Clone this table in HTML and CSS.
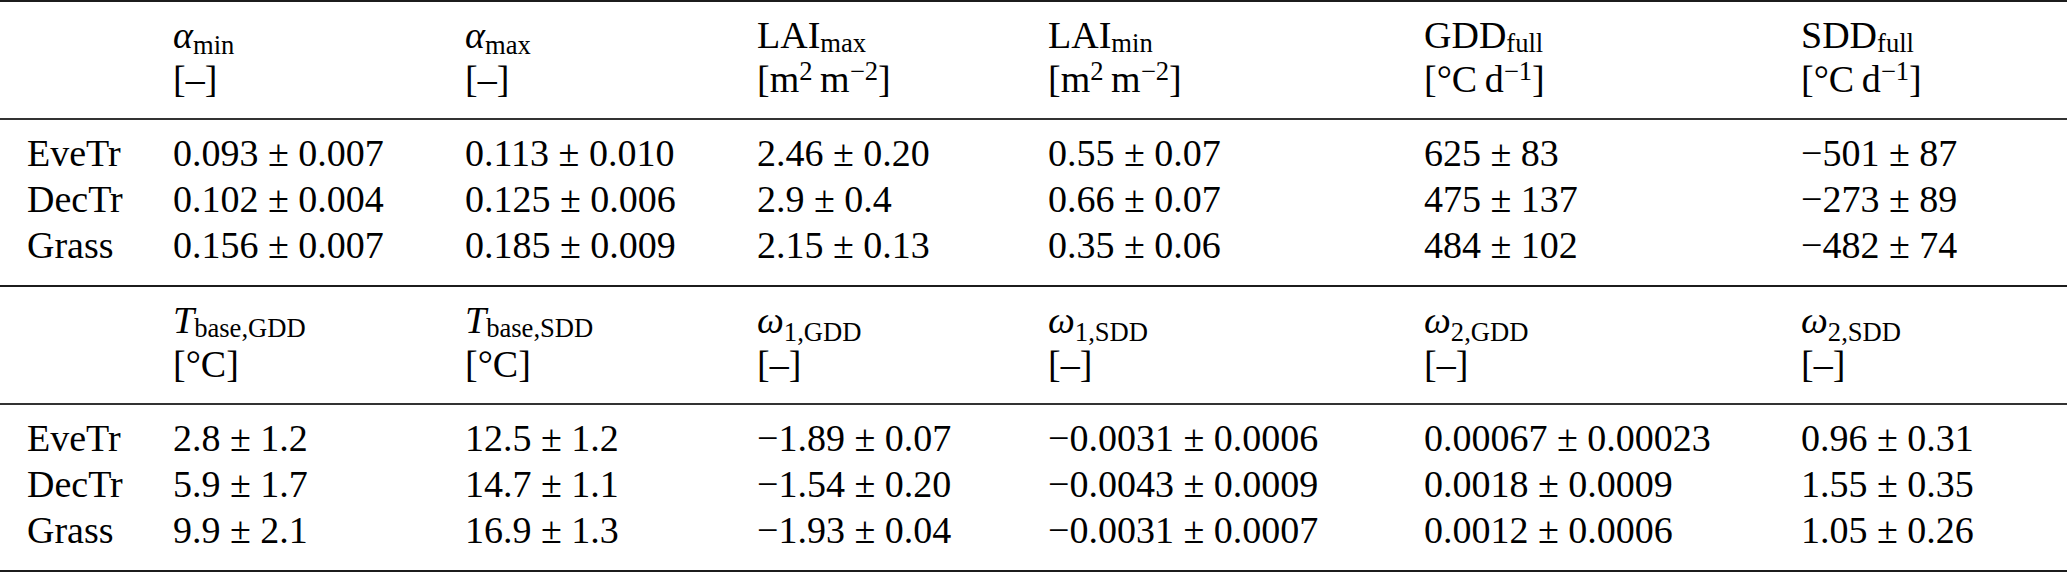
FILE: index.html
```html
<!DOCTYPE html>
<html lang="en">
<head>
<meta charset="utf-8">
<title>Parameters</title>
<link rel="stylesheet" href="styles.css">
</head>
<body>
<div class="table">
  <section class="block">
    <div class="grid head">
      <div class="cell label"></div>
      <div class="cell"><div><i>α</i><sub class="greek">min</sub></div><div>[–]</div></div>
      <div class="cell"><div><i>α</i><sub class="greek">max</sub></div><div>[–]</div></div>
      <div class="cell"><div>LAI<sub>max</sub></div><div>[m<sup>2</sup>&thinsp;m<sup>−2</sup>]</div></div>
      <div class="cell"><div>LAI<sub>min</sub></div><div>[m<sup>2</sup>&thinsp;m<sup>−2</sup>]</div></div>
      <div class="cell"><div>GDD<sub>full</sub></div><div>[°C&thinsp;d<sup>−1</sup>]</div></div>
      <div class="cell"><div>SDD<sub>full</sub></div><div>[°C&thinsp;d<sup>−1</sup>]</div></div>
    </div>
    <div class="grid body">
      <div class="cell label">EveTr</div>
      <div class="cell">0.093 ± 0.007</div>
      <div class="cell">0.113 ± 0.010</div>
      <div class="cell">2.46 ± 0.20</div>
      <div class="cell">0.55 ± 0.07</div>
      <div class="cell">625 ± 83</div>
      <div class="cell">−501 ± 87</div>

      <div class="cell label">DecTr</div>
      <div class="cell">0.102 ± 0.004</div>
      <div class="cell">0.125 ± 0.006</div>
      <div class="cell">2.9 ± 0.4</div>
      <div class="cell">0.66 ± 0.07</div>
      <div class="cell">475 ± 137</div>
      <div class="cell">−273 ± 89</div>

      <div class="cell label">Grass</div>
      <div class="cell">0.156 ± 0.007</div>
      <div class="cell">0.185 ± 0.009</div>
      <div class="cell">2.15 ± 0.13</div>
      <div class="cell">0.35 ± 0.06</div>
      <div class="cell">484 ± 102</div>
      <div class="cell">−482 ± 74</div>
    </div>
  </section>

  <section class="block">
    <div class="grid head">
      <div class="cell label"></div>
      <div class="cell"><div><i>T</i><sub>base,GDD</sub></div><div>[°C]</div></div>
      <div class="cell"><div><i>T</i><sub>base,SDD</sub></div><div>[°C]</div></div>
      <div class="cell"><div><i>ω</i><sub class="low">1,GDD</sub></div><div>[–]</div></div>
      <div class="cell"><div><i>ω</i><sub class="low">1,SDD</sub></div><div>[–]</div></div>
      <div class="cell"><div><i>ω</i><sub class="low">2,GDD</sub></div><div>[–]</div></div>
      <div class="cell"><div><i>ω</i><sub class="low">2,SDD</sub></div><div>[–]</div></div>
    </div>
    <div class="grid body">
      <div class="cell label">EveTr</div>
      <div class="cell">2.8 ± 1.2</div>
      <div class="cell">12.5 ± 1.2</div>
      <div class="cell">−1.89 ± 0.07</div>
      <div class="cell">−0.0031 ± 0.0006</div>
      <div class="cell">0.00067 ± 0.00023</div>
      <div class="cell">0.96 ± 0.31</div>

      <div class="cell label">DecTr</div>
      <div class="cell">5.9 ± 1.7</div>
      <div class="cell">14.7 ± 1.1</div>
      <div class="cell">−1.54 ± 0.20</div>
      <div class="cell">−0.0043 ± 0.0009</div>
      <div class="cell">0.0018 ± 0.0009</div>
      <div class="cell">1.55 ± 0.35</div>

      <div class="cell label">Grass</div>
      <div class="cell">9.9 ± 2.1</div>
      <div class="cell">16.9 ± 1.3</div>
      <div class="cell">−1.93 ± 0.04</div>
      <div class="cell">−0.0031 ± 0.0007</div>
      <div class="cell">0.0012 ± 0.0006</div>
      <div class="cell">1.05 ± 0.26</div>
    </div>
  </section>
</div>
</body>
</html>
```

FILE: styles.css
```css
html, body {
  margin: 0;
  padding: 0;
  background: #ffffff;
}

body {
  color: #000000;
  font-family: "Liberation Serif", "Times New Roman", serif;
  font-size: 38px;
}

.table {
  width: 2067px;
  border-top: 2px solid #1c1c1c;
}

.block {
  border-bottom: 2px solid #1c1c1c;
}

.grid {
  display: grid;
  grid-template-columns: 173px 292px 292px 291px 376px 377px 1fr;
}

.head {
  padding: 11px 0 17px;
  line-height: 44px;
  border-bottom: 2px solid #333333;
}

.body {
  padding: 10px 0 17px;
  line-height: 46px;
}

.cell {
  white-space: nowrap;
}

.label {
  padding-left: 27px;
}

i {
  font-style: italic;
}

sub,
sup {
  font-size: 0.7em;
  line-height: 0;
}

sub {
  vertical-align: -4px;
}

sub.greek {
  vertical-align: -6px;
}

sub.low {
  vertical-align: -8px;
}

sup {
  vertical-align: 12px;
}
```
